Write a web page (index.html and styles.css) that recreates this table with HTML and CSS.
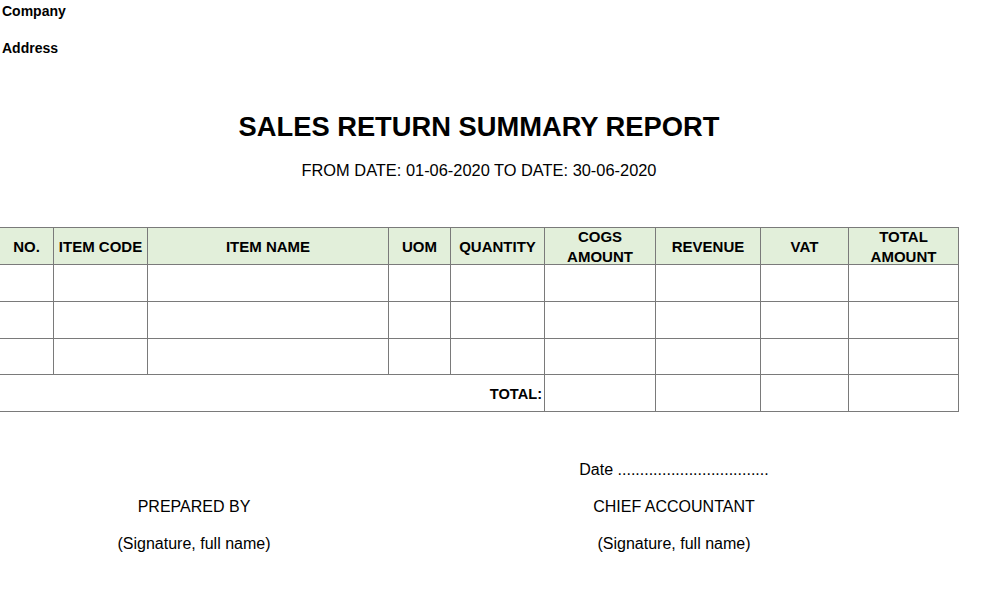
FILE: index.html
```html
<!DOCTYPE html>
<html>
<head>
<meta charset="utf-8">
<link rel="stylesheet" href="styles.css">
</head>
<body>
<div class="sheet">
  <div class="company">Company</div>
  <div class="address">Address</div>
  <h1 class="title">SALES RETURN SUMMARY REPORT</h1>
  <div class="period">FROM DATE: 01-06-2020 TO DATE: 30-06-2020</div>
  <table class="report">
    <colgroup>
      <col class="c-no"><col class="c-code"><col class="c-name"><col class="c-uom"><col class="c-qty"><col class="c-cogs"><col class="c-rev"><col class="c-vat"><col class="c-total">
    </colgroup>
    <thead>
      <tr>
        <th class="first"><div class="h">NO.</div></th>
        <th><div class="h">ITEM CODE</div></th>
        <th><div class="h">ITEM NAME</div></th>
        <th><div class="h">UOM</div></th>
        <th><div class="h">QUANTITY</div></th>
        <th><div class="h">COGS<br>AMOUNT</div></th>
        <th><div class="h">REVENUE</div></th>
        <th><div class="h">VAT</div></th>
        <th><div class="h">TOTAL<br>AMOUNT</div></th>
      </tr>
    </thead>
    <tbody>
      <tr><td class="first"></td><td></td><td></td><td></td><td></td><td></td><td></td><td></td><td></td></tr>
      <tr><td class="first"></td><td></td><td></td><td></td><td></td><td></td><td></td><td></td><td></td></tr>
      <tr class="short"><td class="first"></td><td></td><td></td><td></td><td></td><td></td><td></td><td></td><td></td></tr>
      <tr><td class="first total-label" colspan="5">TOTAL:</td><td></td><td></td><td></td><td></td></tr>
    </tbody>
  </table>
  <div class="signatures">
    <div class="sig-col">
      <div class="sig-line"></div>
      <div class="sig-line">PREPARED BY</div>
      <div class="sig-line">(Signature, full name)</div>
    </div>
    <div class="sig-col">
      <div class="sig-line">Date ..................................</div>
      <div class="sig-line">CHIEF ACCOUNTANT</div>
      <div class="sig-line">(Signature, full name)</div>
    </div>
  </div>
</div>
</body>
</html>
```
FILE: styles.css
```css
html, body {
  margin: 0;
  padding: 0;
  background: #ffffff;
}
body {
  font-family: "Liberation Sans", Arial, sans-serif;
  color: #000000;
}
.sheet {
  width: 989px;
}
.company,
.address {
  font-size: 14px;
  font-weight: bold;
  line-height: 22px;
  height: 22px;
  padding-left: 2px;
}
.address {
  margin-top: 15px;
}
.title {
  margin: 50px 0 0 0;
  width: 958px;
  text-align: center;
  font-size: 27.3px;
  font-weight: bold;
  line-height: 36px;
}
.period {
  margin-top: 13px;
  width: 958px;
  text-align: center;
  font-size: 16.4px;
  line-height: 24px;
}
.report {
  margin-top: 45px;
  border-collapse: collapse;
  table-layout: fixed;
  width: 959px;
  margin-left: -1px;
}
.c-no { width: 54px; }
.c-code { width: 94px; }
.c-name { width: 241px; }
.c-uom { width: 62px; }
.c-qty { width: 94px; }
.c-cogs { width: 111px; }
.c-rev { width: 105px; }
.c-vat { width: 88px; }
.c-total { width: 110px; }
.report th,
.report td {
  border: 1px solid #7a7a7a;
  height: 37px;
  padding: 0;
  box-sizing: border-box;
}
.report tr.short td {
  height: 36px;
}
.report th {
  background: #e2efda;
  font-size: 15px;
  font-weight: bold;
  text-align: center;
  vertical-align: middle;
}
.h {
  height: 36px;
  box-sizing: border-box;
  padding-top: 2px;
  display: flex;
  flex-direction: column;
  justify-content: center;
  line-height: 20px;
}
.report .first {
  border-left-color: transparent;
}
.report td.total-label {
  text-align: right;
  font-size: 14.6px;
  font-weight: bold;
  padding-right: 2px;
  padding-top: 2px;
}
.signatures {
  margin-top: 39px;
  display: grid;
  grid-template-columns: 388px 572px;
}
.sig-col {
  display: flex;
  flex-direction: column;
  align-items: center;
}
.sig-line {
  height: 37px;
  line-height: 37px;
  font-size: 16px;
  white-space: nowrap;
}
```
